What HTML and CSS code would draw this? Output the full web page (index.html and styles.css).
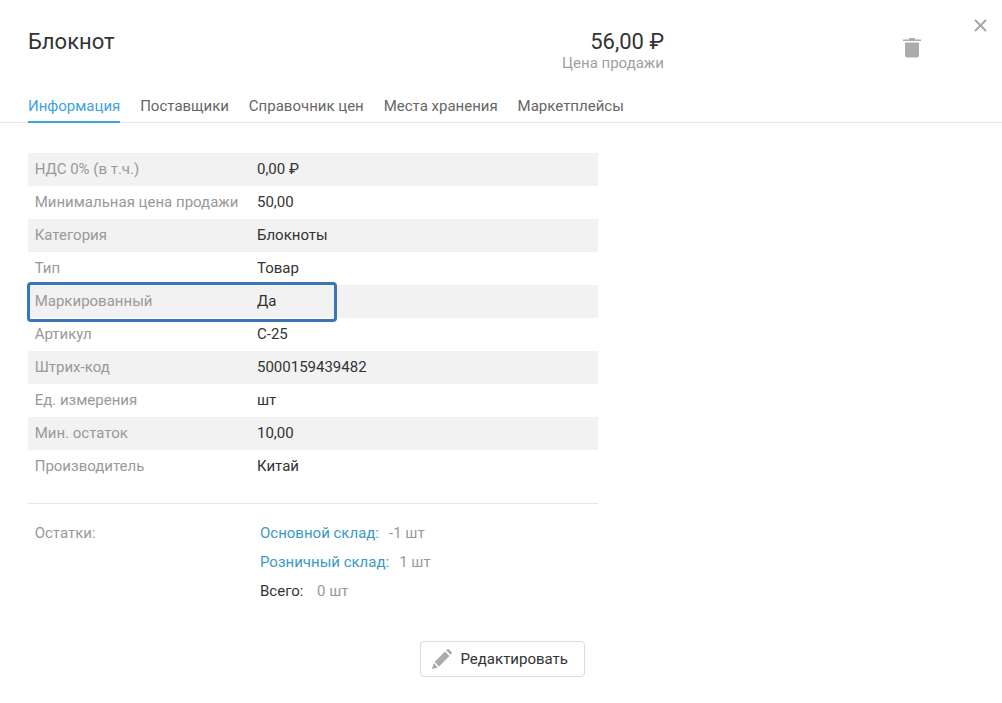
FILE: index.html
```html
<!DOCTYPE html>
<html lang="ru">
<head>
<meta charset="utf-8">
<title>Блокнот</title>
<link rel="stylesheet" href="styles.css">
</head>
<body>
<div class="modal">
  <button class="close" aria-label="Закрыть">
    <svg width="13" height="13" viewBox="0 0 13 13"><path d="M1 1 12 12M12 1 1 12" stroke="#a8a8a8" stroke-width="2" fill="none"/></svg>
  </button>
  <header class="head">
    <h1 class="title">Блокнот</h1>
    <div class="price">
      <div class="price-value">56,00 ₽</div>
      <div class="price-label">Цена продажи</div>
    </div>
    <button class="trash" aria-label="Удалить">
      <svg width="18" height="21" viewBox="0 0 18 21"><path d="M0 4V2.6H5.5L6.6 1H11.4L12.5 2.6H18V4Z" fill="#ababab"/><path d="M2 5.5H16V18.5C16 19.6 15.2 20.4 14 20.4H4C2.8 20.4 2 19.6 2 18.5Z" fill="#ababab"/></svg>
    </button>
  </header>
  <nav class="tabs">
    <a class="tab active">Информация</a>
    <a class="tab">Поставщики</a>
    <a class="tab">Справочник цен</a>
    <a class="tab">Места хранения</a>
    <a class="tab">Маркетплейсы</a>
  </nav>
  <section class="content">
    <div class="table">
      <div class="row"><span class="key">НДС 0% (в т.ч.)</span><span class="val">0,00 ₽</span></div>
      <div class="row"><span class="key">Минимальная цена продажи</span><span class="val">50,00</span></div>
      <div class="row"><span class="key">Категория</span><span class="val">Блокноты</span></div>
      <div class="row"><span class="key">Тип</span><span class="val">Товар</span></div>
      <div class="row marked"><span class="key">Маркированный</span><span class="val">Да</span><i class="highlight"></i></div>
      <div class="row"><span class="key">Артикул</span><span class="val">С-25</span></div>
      <div class="row"><span class="key">Штрих-код</span><span class="val">5000159439482</span></div>
      <div class="row"><span class="key">Ед. измерения</span><span class="val">шт</span></div>
      <div class="row"><span class="key">Мин. остаток</span><span class="val">10,00</span></div>
      <div class="row"><span class="key">Производитель</span><span class="val">Китай</span></div>
    </div>
    <div class="stock">
      <div class="stock-label">Остатки:</div>
      <div class="stock-list">
        <div class="stock-line"><a class="link">Основной склад:</a><span class="qty">-1 шт</span></div>
        <div class="stock-line"><a class="link">Розничный склад:</a><span class="qty">1 шт</span></div>
        <div class="stock-line"><span class="total">Всего:</span><span class="qty wide">0 шт</span></div>
      </div>
    </div>
    <div class="actions">
      <button class="edit">
        <svg width="20" height="20" viewBox="0 0 20 20"><path d="M0 20 1.6 14 6 18.4Z" fill="#ababab"/><path d="M2.6 13 13 2.6 17.4 7 7 17.4Z" fill="#ababab"/><path d="M14.2 1.4 15 .6C15.7 0 16.6 0 17.2.6L19.4 2.8C20 3.4 20 4.3 19.4 5L18.6 5.8Z" fill="#ababab"/></svg>
        <span>Редактировать</span>
      </button>
    </div>
  </section>
</div>
</body>
</html>
```

FILE: styles.css
```css
* { box-sizing: border-box; }
html, body { margin: 0; height: 100%; }
body {
  background: #fff;
  font-family: Roboto, "Liberation Sans", sans-serif;
  font-size: 15px;
  color: #333;
  overflow: hidden;
}
button { font: inherit; background: none; border: 0; padding: 0; }
.modal { position: relative; height: 703px; }
.close { position: absolute; top: 19px; right: 15px; width: 13px; height: 13px; display: block; }
.close svg, .trash svg, .edit svg { display: block; }
.head { display: flex; align-items: flex-start; height: 88px; padding: 29px 0 0 28px; }
.title { margin: 0; width: 564px; font-size: 22px; font-weight: 400; line-height: 26px; color: #333; }
.price { width: 72px; flex: none; white-space: nowrap; display: flex; flex-direction: column; align-items: flex-end; }
.price-value { font-size: 22px; line-height: 26px; color: #333; }
.price-label { font-size: 15px; line-height: 18px; color: #a0a0a0; margin-top: -1px; }
.trash { margin: 8px 0 0 239px; width: 18px; height: 21px; }
.tabs { display: flex; gap: 19.9px; padding-left: 28px; height: 35px; border-bottom: 1px solid #e6e6e6; }
.tab { height: 35px; padding-top: 9px; line-height: 18px; color: #666; }
.tab.active { color: #3fa3e0; border-bottom: 2px solid #3fa3e0; }
.content { padding: 30px 0 0 28px; }
.table { width: 570px; border-bottom: 1px solid #e6e6e6; padding-bottom: 20px; }
.row { position: relative; display: flex; align-items: center; height: 33px; padding: 0 0 2px 6.7px; }
.row:nth-child(odd) { background: #f2f2f2; }
.key { width: 222.3px; color: #999; }
.val { color: #333; }
.highlight { position: absolute; left: -1px; top: -3px; width: 310px; height: 40px; border: 3px solid #3a75b5; border-radius: 4px; }
.stock { display: flex; padding: 20px 0 0 6.7px; }
.stock-label { width: 225.3px; line-height: 18px; color: #999; }
.stock-list { display: flex; flex-direction: column; gap: 11px; }
.stock-line { line-height: 18px; display: flex; }
.link { color: #3a9ac4; }
.qty { color: #999; margin-left: 10px; }
.qty.wide { margin-left: 13.6px; }
.total { color: #333; }
.actions { padding: 41px 0 0 392px; }
.edit { display: flex; align-items: center; gap: 9px; width: 165px; height: 36px; padding: 0 0 1px 10.5px; border: 1px solid #dcdcdc; border-radius: 4px; color: #333; background: #fff; }
```
